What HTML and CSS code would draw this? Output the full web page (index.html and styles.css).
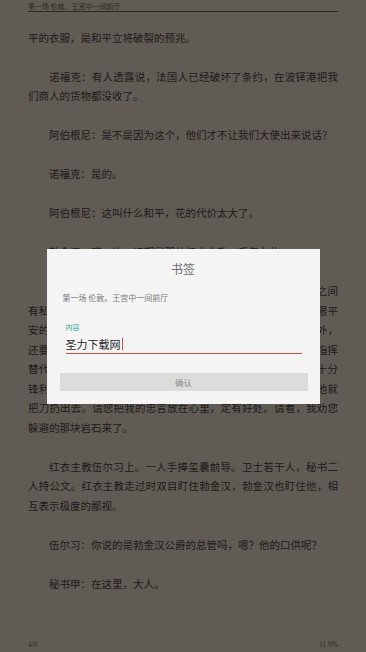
FILE: index.html
```html
<!DOCTYPE html>
<html lang="zh-CN">
<head>
<meta charset="utf-8">
<title>阅读</title>
<link rel="stylesheet" href="styles.css">
</head>
<body>
<div class="page">
  <header class="running-head">第一场 伦敦。王宫中一间前厅</header>
  <article class="text">
    <p>平的衣服，是和平立将破裂的预兆。</p>
    <p class="indent">诺福克：有人透露说，法国人已经破坏了条约，在波铎港把我们商人的货物都没收了。</p>
    <p class="indent">阿伯根尼：是不是因为这个，他们才不让我们大使出来说话？</p>
    <p class="indent">诺福克：是的。</p>
    <p class="indent">阿伯根尼：这叫什么和平，花的代价太大了。</p>
    <p class="indent">勃金汉：哼，这一切都是那位红衣主教一手包办的。</p>
    <p class="indent">诺福克：对不起，大人，全国上下都已知道您和红衣主教之间有私怨。您要知道，他心怀恶意，又有权势，他的怨恨已经无限平安的人也难以防备他的暗算，他手段毒辣，有仇必报。除此之外，还要记住，他的权力无处不在，宫中的大小事务都是由他一手指挥替代国王发号施令，他的那把复仇之剑既长又利，而且被磨得十分锋利，凡是够不着的地方，他都可以远远投过去。只要有机会他就把刀扔出去。请您把我的忠言放在心里，定有好处。请看，我劝您躲避的那块岩石来了。</p>
    <p class="indent">红衣主教伍尔习上。一人手捧玺囊前导。卫士若干人，秘书二人持公文。红衣主教走过时双目盯住勃金汉，勃金汉也盯住他，相互表示极度的鄙视。</p>
    <p class="indent">伍尔习：你说的是勃金汉公爵的总管吗，嗯？他的口供呢？</p>
    <p class="indent">秘书甲：在这里，大人。</p>
  </article>
  <footer class="status">
    <span>4/0</span>
    <span>11.9%</span>
  </footer>
</div>

<div class="dialog" role="dialog" aria-label="书签">
  <h2 class="dialog-title">书签</h2>
  <p class="dialog-chapter">第一场 伦敦。王宫中一间前厅</p>
  <div class="field">
    <label class="field-label">内容</label>
    <div class="field-input"><span>圣力下载网</span><span class="caret"></span></div>
  </div>
  <button class="confirm" type="button">确认</button>
</div>
</body>
</html>
```

FILE: styles.css
```css
html, body {
  margin: 0;
  padding: 0;
}

body {
  background: #615b56;
  font-family: "Noto Sans CJK SC", "Noto Sans", sans-serif;
  color: #1c1a18;
}

.page {
  box-sizing: border-box;
  height: 652px;
  padding: 0 28px;
  display: flex;
  flex-direction: column;
  overflow: hidden;
}

.running-head {
  font-size: 7px;
  line-height: 9px;
  padding-top: 2px;
  color: #2b2825;
  border-bottom: 1px solid #2a2724;
  white-space: nowrap;
}

.text {
  flex: 1;
  overflow: hidden;
  margin-top: 15.5px;
}

.text p {
  margin: 0 0 19.5px;
  font-size: 10.5px;
  line-height: 19.5px;
  text-align: justify;
}

.text p.indent {
  text-indent: 2em;
}

.status {
  display: flex;
  justify-content: space-between;
  font-family: "Liberation Serif", "DejaVu Serif", serif;
  font-size: 7.5px;
  line-height: 10px;
  padding-bottom: 2px;
  color: #2f2c29;
}

/* modal */
.dialog {
  position: fixed;
  inset: 0;
  margin: auto;
  width: 273px;
  height: 155px;
  box-sizing: border-box;
  background: #f4f4f4;
  padding: 12px 0 0;
}

.dialog-title {
  margin: 0;
  font-size: 12px;
  line-height: 16px;
  font-weight: normal;
  text-align: center;
  color: #6e6e6e;
}

.dialog-chapter {
  margin: 15px 0 0;
  padding-left: 16px;
  font-size: 8px;
  line-height: 12px;
  color: #777;
}

.field {
  margin: 18.5px 18px 0 19px;
}

.field-label {
  display: block;
  font-size: 7px;
  line-height: 10px;
  color: #3aa89b;
}

.field-input {
  margin-top: 4.5px;
  display: flex;
  align-items: center;
  font-size: 11px;
  line-height: 14px;
  color: #1e1e1e;
  padding-bottom: 2px;
  border-bottom: 1.5px solid #c9503d;
}

.caret {
  display: inline-block;
  width: 1px;
  height: 12px;
  margin-left: 1px;
  background: #c9503d;
}

.confirm {
  display: block;
  margin: 19px 12px 0 13px;
  width: calc(100% - 25px);
  height: 18px;
  padding: 0;
  border: 0;
  border-radius: 0;
  background: #dcdcdc;
  font-family: "Noto Sans CJK SC", "Noto Sans", sans-serif;
  font-size: 8.5px;
  line-height: 18px;
  color: #8a8a8a;
}
```
